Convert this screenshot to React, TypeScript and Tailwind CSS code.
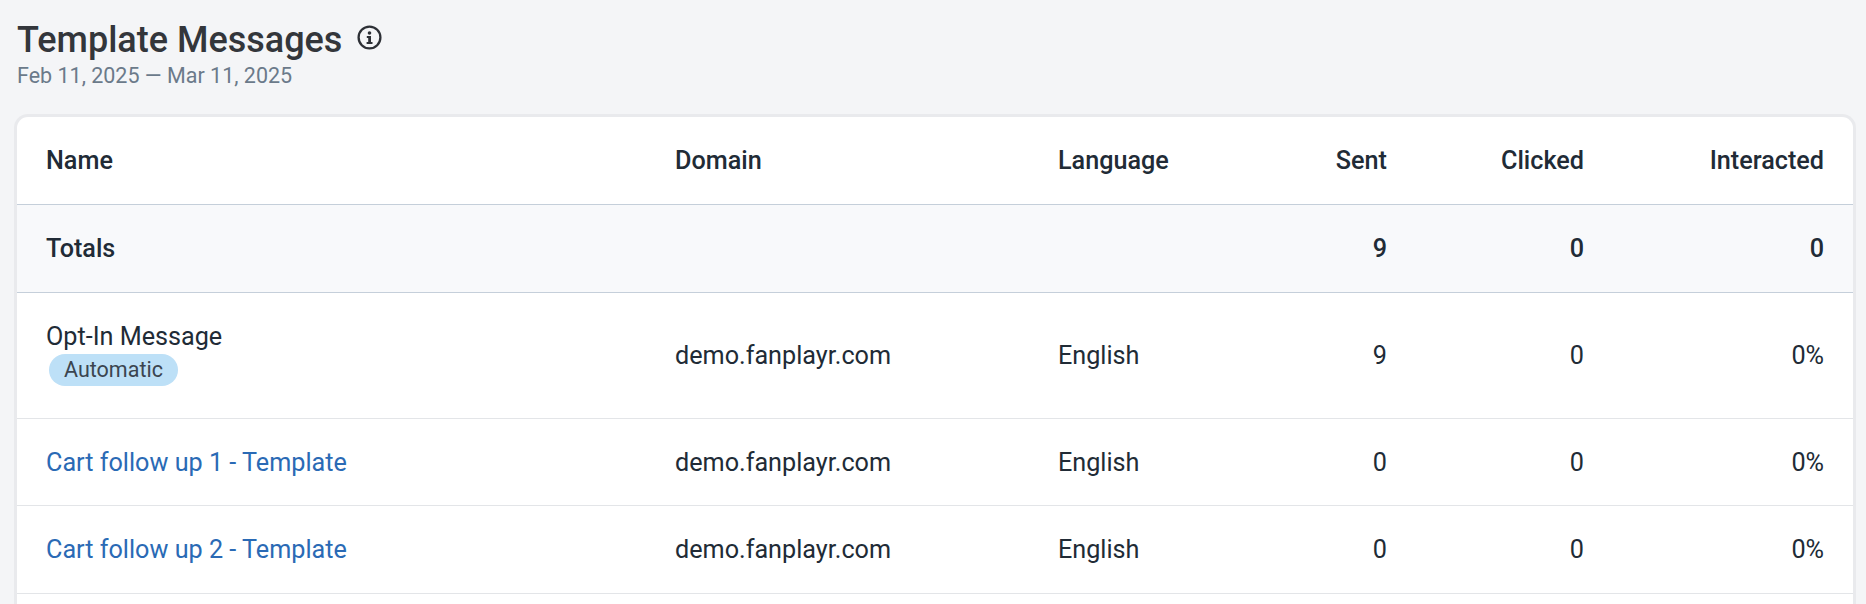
const rows = [
  { name: "Cart follow up 1 - Template", sent: 0, height: "h-[87px]" },
  { name: "Cart follow up 2 - Template", sent: 0, height: "h-[88px]" },
];

function InfoIcon() {
  return (
    <svg width="25" height="25" viewBox="0 0 25 25" className="ml-[15px] -mt-[6px] text-[#2d3036]" fill="none">
      <circle cx="12.5" cy="12.5" r="10.9" stroke="currentColor" strokeWidth="2.3" />
      <circle cx="12.5" cy="8" r="1.8" fill="currentColor" />
      <path d="M9.8 10.9h4.2v6.2h1.5v2H9.6v-2h1.6v-4.2H9.8z" fill="currentColor" />
    </svg>
  );
}

export default function App() {
  return (
    <div className="h-[604px] overflow-hidden bg-[#f4f5f7] font-['Roboto',sans-serif]">
      <div className="px-[14px] pt-[18px]">
        <div className="pl-[3px]">
          <div className="flex items-center">
            <h1 className="text-[36px] leading-[44px] font-medium text-[#33363b]">Template Messages</h1>
            <InfoIcon />
          </div>
          <p className="mt-[2px] text-[21.5px] leading-[24px] text-[#6b7a8a]">Feb 11, 2025 — Mar 11, 2025</p>
        </div>
        <div className="mt-[26px] w-[1842px] rounded-t-[14px] border-[3px] border-b-0 border-[#e9eaed] bg-white overflow-hidden">
          <table className="w-full table-fixed border-collapse text-[25.2px] text-[#212b36] [&_td]:pt-[2px] [&_th]:pt-[2px]">
            <colgroup>
              <col className="w-[658px]" />
              <col className="w-[383px]" />
              <col className="w-[200px]" />
              <col className="w-[129px]" />
              <col className="w-[197px]" />
              <col className="w-[269px]" />
            </colgroup>
            <thead>
              <tr className="h-[87px] border-b border-[#c5cfda]">
                <th className="pl-[29px] text-left font-medium">Name</th>
                <th className="text-left font-medium">Domain</th>
                <th className="text-left font-medium">Language</th>
                <th className="text-right font-medium">Sent</th>
                <th className="text-right font-medium">Clicked</th>
                <th className="pr-[29px] text-right font-medium">Interacted</th>
              </tr>
            </thead>
            <tbody>
              <tr className="h-[88px] border-b border-[#c5cfda] bg-[#f8f9fb] font-medium">
                <td className="pl-[29px]">Totals</td>
                <td />
                <td />
                <td className="text-right">9</td>
                <td className="text-right">0</td>
                <td className="pr-[29px] text-right">0</td>
              </tr>
              <tr className="h-[126px] border-b border-[#e3e5e8]">
                <td className="pl-[29px]">
                  <div className="leading-[26px]">Opt-In Message</div>
                  <span className="ml-[3px] inline-flex h-[32px] items-center rounded-full bg-[#bde0f7] px-[15px] text-[21.5px] text-[#3b4550]">
                    Automatic
                  </span>
                </td>
                <td>demo.fanplayr.com</td>
                <td>English</td>
                <td className="text-right">9</td>
                <td className="text-right">0</td>
                <td className="pr-[29px] text-right">0%</td>
              </tr>
              {rows.map((r) => (
                <tr key={r.name} className={`${r.height} border-b border-[#e3e5e8]`}>
                  <td className="pl-[29px] text-[#2a6ab5]">{r.name}</td>
                  <td>demo.fanplayr.com</td>
                  <td>English</td>
                  <td className="text-right">{r.sent}</td>
                  <td className="text-right">0</td>
                  <td className="pr-[29px] text-right">0%</td>
                </tr>
              ))}
            </tbody>
          </table>
          <div className="h-[40px]" />
        </div>
      </div>
    </div>
  );
}
